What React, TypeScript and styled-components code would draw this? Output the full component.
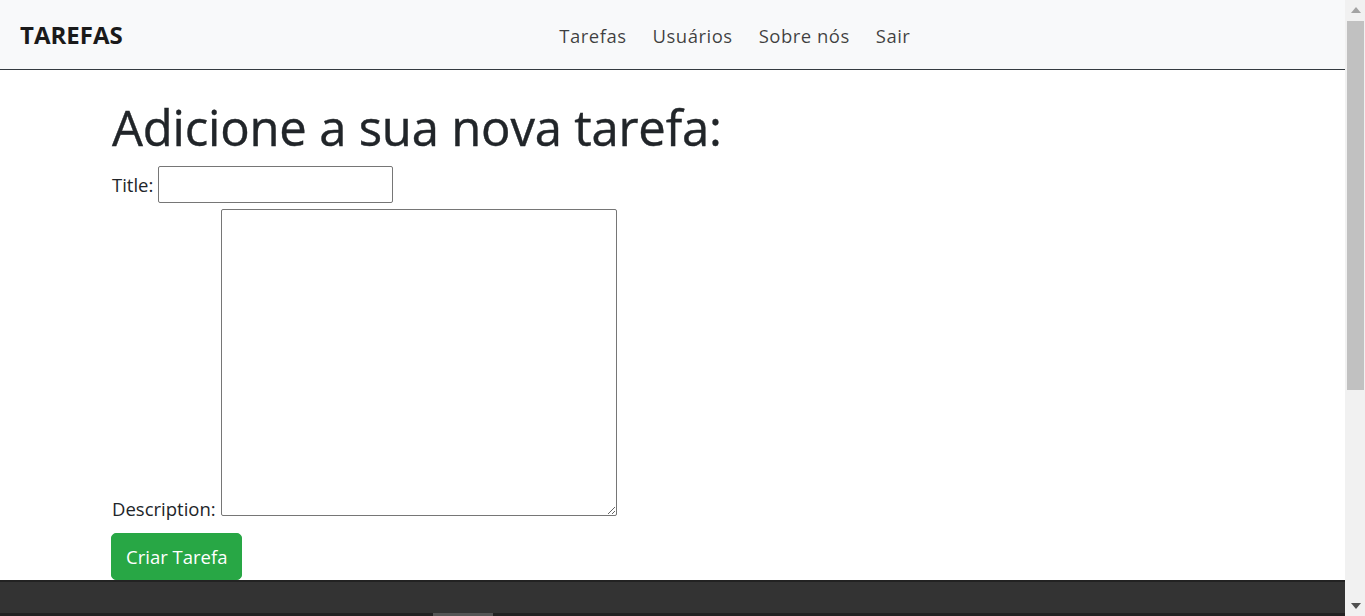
import React from "react";
import styled, { createGlobalStyle } from "styled-components";

const Global = createGlobalStyle`
  html, body { height: 100%; }
  body {
    margin: 0;
    font-family: "Open Sans", "Noto Sans", sans-serif;
    font-size: 18.5px;
    color: #212529;
    background: #fff;
    overflow: hidden;
  }
`;

const Page = styled.div`
  display: flex;
  height: 616px;
  overflow: hidden;
`;

const Viewport = styled.div`
  flex: 1;
  min-width: 0;
  display: flex;
  flex-direction: column;
`;

const Scrollbar = styled.div`
  width: 20px;
  flex: none;
  display: flex;
  flex-direction: column;
  background: #f1f1f1;
`;

const ScrollArrow = styled.div`
  height: 20px;
  display: flex;
  align-items: center;
  justify-content: center;
  padding-left: 1px;
`;

const ScrollTrack = styled.div`
  flex: 1;
  padding: 1px 1px 0 2px;
`;

const ScrollThumb = styled.div`
  height: 369px;
  background: #c1c1c1;
`;

const NavBar = styled.nav`
  display: flex;
  align-items: center;
  height: 70px;
  padding: 0 20px;
  box-sizing: border-box;
  background: #f8f9fa;
  border-bottom: 1px solid #343a40;
  flex: none;
`;

const Brand = styled.a`
  font-size: 24px;
  font-weight: 700;
  color: #1a1a1a;
  text-decoration: none;
  margin-right: 22px;
`;

const NavList = styled.ul`
  display: flex;
  gap: 26px;
  list-style: none;
  margin: 0 auto;
  padding: 2px 0 0;
`;

const NavLink = styled.a`
  font-size: 18.5px;
  letter-spacing: 0.5px;
  color: rgba(0, 0, 0, 0.75);
  text-decoration: none;
`;

const Container = styled.main`
  padding: 0 112px;
  flex: none;
`;

const Heading = styled.h1`
  margin: 0 0 10px;
  padding-top: 27.5px;
  font-size: 49px;
  font-weight: 500;
  line-height: 1.2;
  letter-spacing: -0.2px;
  color: #212529;
  -webkit-text-stroke: 0.4px #212529;
`;

const Form = styled.form`
  display: flex;
  flex-direction: column;
  gap: 6px;
  align-items: flex-start;
`;

const Field = styled.label`
  display: block;
  line-height: 30px;
`;

const TextInput = styled.input`
  width: 235px;
  height: 37px;
  box-sizing: border-box;
  margin-left: 5px;
  border: 1px solid #767676;
  border-radius: 2px;
  font: inherit;
  vertical-align: baseline;
`;

const TextArea = styled.textarea`
  width: 396px;
  height: 307px;
  box-sizing: border-box;
  margin: 0 0 0 5px;
  border: 1px solid #767676;
  border-radius: 2px;
  font: inherit;
  vertical-align: 0;
`;

const SubmitButton = styled.button`
  margin-top: 3px;
  margin-left: -1px;
  height: 47px;
  padding: 0 14px;
  font: inherit;
  font-size: 18.5px;
  color: #fff;
  background: #28a745;
  border: 1px solid #28a745;
  border-radius: 5px;
  cursor: pointer;
`;

const Footer = styled.footer`
  flex: 1;
  display: flex;
  flex-direction: column;
  justify-content: flex-end;
  background: #333;
  border-top: 2px solid #222;
`;

const FooterStrip = styled.div`
  height: 3px;
  background: #222;
`;

const FooterMark = styled.div`
  width: 60px;
  height: 3px;
  margin-left: 433px;
  background: #555;
`;

export default function App() {
  return (
    <>
      <Global />
      <Page>
        <Viewport>
          <NavBar>
            <Brand href="#">TAREFAS</Brand>
            <NavList>
              <li><NavLink href="#">Tarefas</NavLink></li>
              <li><NavLink href="#">Usuários</NavLink></li>
              <li><NavLink href="#">Sobre nós</NavLink></li>
              <li><NavLink href="#">Sair</NavLink></li>
            </NavList>
          </NavBar>
          <Container>
            <Heading>Adicione a sua nova tarefa:</Heading>
            <Form onSubmit={(e) => e.preventDefault()}>
              <Field>
                Title:<TextInput type="text" />
              </Field>
              <Field>
                Description:<TextArea />
              </Field>
              <SubmitButton type="submit">Criar Tarefa</SubmitButton>
            </Form>
          </Container>
          <Footer>
            <FooterStrip>
              <FooterMark />
            </FooterStrip>
          </Footer>
        </Viewport>
        <Scrollbar>
          <ScrollArrow>
            <svg width="10" height="6" viewBox="0 0 10 6">
              <polygon points="0,6 10,6 5,0" fill="#a3a3a3" />
            </svg>
          </ScrollArrow>
          <ScrollTrack>
            <ScrollThumb />
          </ScrollTrack>
          <ScrollArrow>
            <svg width="10" height="6" viewBox="0 0 10 6">
              <polygon points="0,0 10,0 5,6" fill="#505050" />
            </svg>
          </ScrollArrow>
        </Scrollbar>
      </Page>
    </>
  );
}
